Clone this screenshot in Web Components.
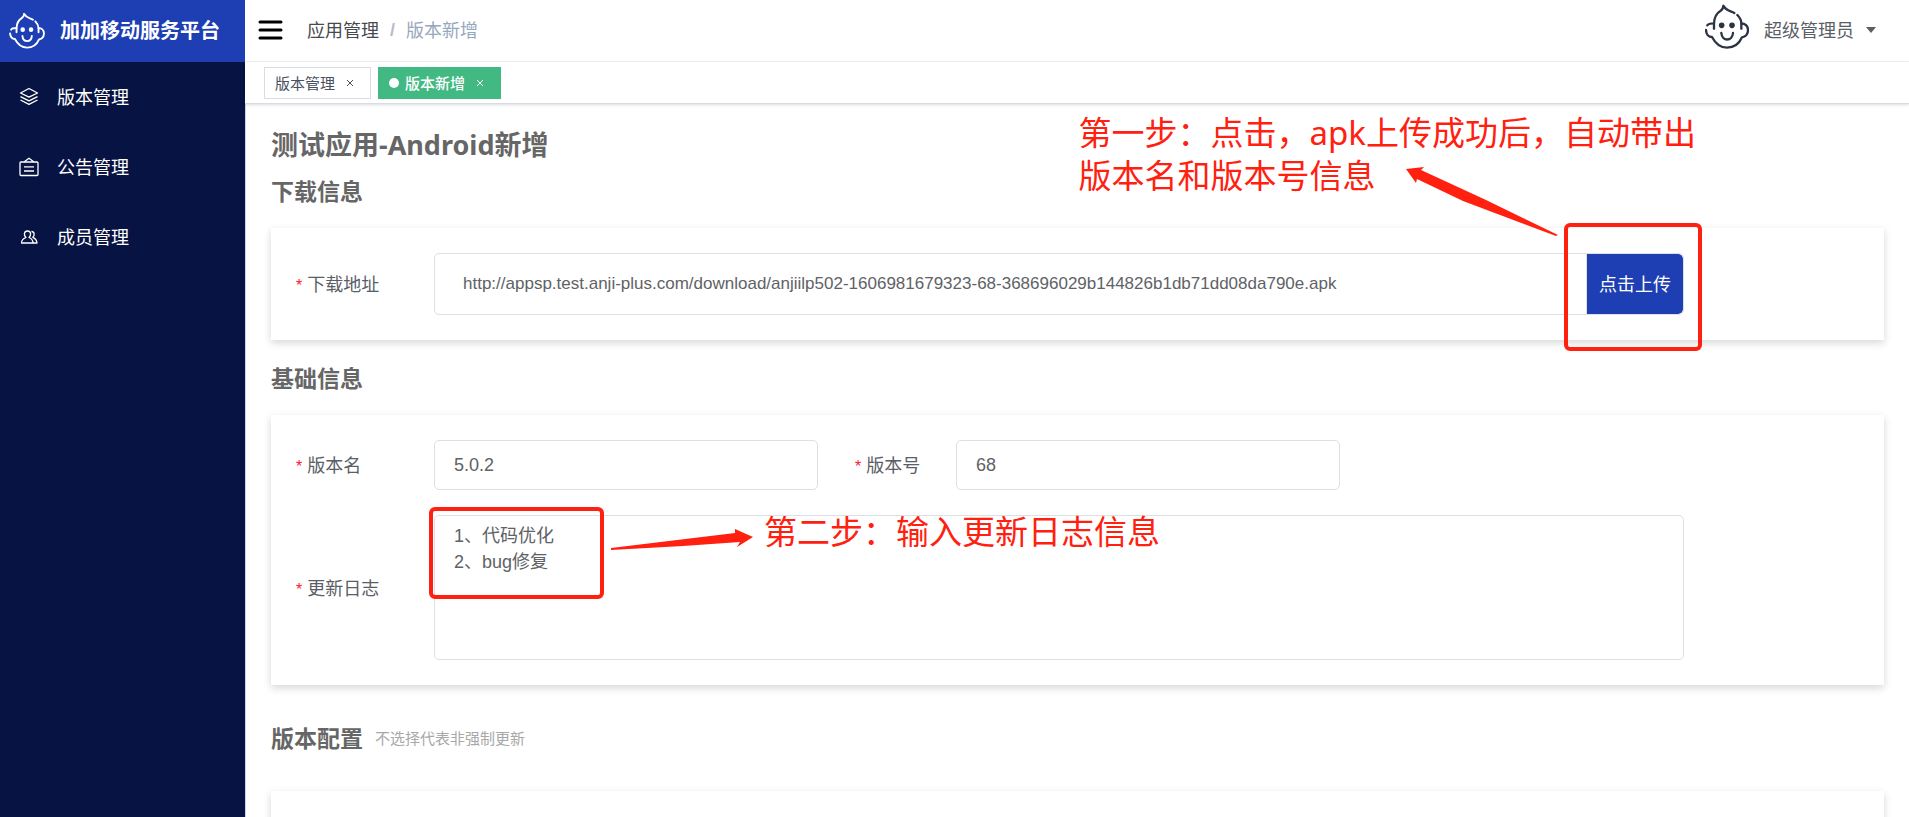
<!DOCTYPE html>
<html lang="zh-CN">
<head>
<meta charset="utf-8">
<title>版本新增 - 加加移动服务平台</title>
<style>
  :root {
    --brand: #1e3eb4;
    --navy: #071443;
    --text: #5a5e66;
    --line: #dcdfe6;
    --mark: #ff2010;
    --cjk: "Noto Sans", "Noto Sans CJK SC", sans-serif;
  }
  html, body { margin: 0; height: 100%; }
  body { font: 18px/26px var(--cjk); color: var(--text); background: #fff; }
</style>
</head>
<body>
<app-shell>
  <app-sidebar slot="side">
    <nav-item icon="layers">版本管理</nav-item>
    <nav-item icon="board">公告管理</nav-item>
    <nav-item icon="users">成员管理</nav-item>
  </app-sidebar>
  <app-header slot="head" section="应用管理" page="版本新增" user="超级管理员"></app-header>
  <tab-strip slot="head">
    <tab-item>版本管理</tab-item>
    <tab-item active>版本新增</tab-item>
  </tab-strip>
  <page-title>测试应用-Android新增</page-title>

  <form-section heading="下载信息">
    <form-field class="url" label="下载地址" value="http://appsp.test.anji-plus.com/download/anjiilp502-1606981679323-68-368696029b144826b1db71dd08da790e.apk">
      <upload-button>点击上传</upload-button>
    </form-field>
    <step-one slot="note"></step-one>
  </form-section>

  <form-section heading="基础信息">
    <field-row>
      <form-field label="版本名" value="5.0.2"></form-field>
      <form-field label="版本号" value="68" inset></form-field>
    </field-row>
    <form-field label="更新日志" multiline value="1、代码优化&#10;2、bug修复"></form-field>
    <step-two slot="note"></step-two>
  </form-section>

  <form-section heading="版本配置" hint="不选择代表非强制更新" spaced></form-section>
</app-shell>

<script>
const FACE = `<svg viewBox="0 0 132 134" fill="none" stroke="currentColor" stroke-width="7" stroke-linecap="round" stroke-linejoin="round" aria-hidden="true">
  <path d="M88 25C78 18 64 20 55 3C56 12 52 15 45 20C32 28 28 40 27 56C12 56 9 58 7 62"/>
  <path d="M3 76C4 90 12 97 21 97C32 118 47 129 66 129C88 129 103 116 111 98C122 96 129 87 129 76C129 64 120 56 109 56C109 47 104 38 97 31"/>
  <path d="M27 57V72"/><path d="M109 57V72"/>
  <path d="M49 85C51 111 82 111 84 85"/>
  <circle cx="50" cy="62" r="5" fill="currentColor"/><circle cx="81" cy="62" r="5" fill="currentColor"/></svg>`;

const ICONS = {
  layers: `<path d="M10 1.5L18.5 6L10 10.2L1.500 6Z"/><path d="M1.500 9.600L10 13.800L18.500 9.600"/><path d="M1.500 13L10 17.300L18.500 13"/>`,
  board: `<rect x="1" y="5" width="18" height="13.500" rx="1"/><path d="M5 5L10 1.200L15 5"/><path d="M5 9.800H15M5 14H15"/>`,
  users: `<path d="M7 10.500C4.500 8.500 4.800 4 8.500 4S12.500 8.500 10 10.500C12.500 11.500 14 13 14 16H2.500C2.500 13 4.500 11.500 7 10.500Z"/><path d="M12.500 4.500C15.500 4.500 16 8.500 13.800 10.300C16.500 11.500 17.800 13 18 16H14"/>`
};

/* Registers an element whose shadow root is rendered from its attributes. */
function define(name, css, html) {
  customElements.define(name, class extends HTMLElement {
    connectedCallback() {
      if (this.shadowRoot) return;
      const t = document.createElement('template');
      t.innerHTML = `<style>:host,*{box-sizing:border-box}${css}</style>` + html(this);
      this.attachShadow({ mode: 'open' }).append(t.content.cloneNode(true));
    }
  });
}
const attr = (el, n) => el.getAttribute(n) || '';

define('app-shell', `
  :host{display:grid;grid-template-columns:245px minmax(0,1fr);height:100vh}
  .right{display:flex;flex-direction:column;min-width:0;min-height:0}
  header{position:relative;z-index:1}
  main{flex:1;min-height:0;overflow:hidden auto;scrollbar-width:none;border-left:1px solid #ccd4f3;padding:23px 25px 25px}`,
  () => `<slot name="side"></slot><div class="right"><header><slot name="head"></slot></header><main><slot></slot></main></div>`);

define('app-sidebar', `
  :host{display:block;background:var(--navy);color:#fff}
  .brand{display:flex;align-items:center;gap:14px;height:62px;padding:0 8px;background:var(--brand);font-size:20px;font-weight:700;white-space:nowrap}
  svg{width:38px;height:36px;flex:none}`,
  () => `<div class="brand">${FACE}<span>加加移动服务平台</span></div><nav><slot></slot></nav>`);

define('nav-item', `
  :host{display:block}
  a{display:flex;align-items:center;gap:18px;height:70px;padding-left:19px;color:#fff;text-decoration:none}
  svg{width:20px;height:20px;flex:none}`,
  el => `<a href="#"><svg viewBox="0 0 20 20" fill="none" stroke="currentColor" stroke-width="1.300" stroke-linejoin="round" aria-hidden="true">${ICONS[attr(el,'icon')]}</svg><slot></slot></a>`);

define('app-header', `
  :host{display:flex;align-items:center;height:62px;padding:0 33px 2px 13px;border-bottom:1px solid #f4f4f6;background:#fff}
  button{border:0;background:none;padding:0;font:inherit;color:inherit;display:flex;align-items:center}
  .menu{color:#000;margin-right:24px}
  .crumb{display:flex;gap:11px;flex:1}
  .crumb a{color:#48494d;text-decoration:none}
  .crumb i{color:#b4bccc;font-style:normal;font-family:"Liberation Sans",sans-serif;font-weight:700}
  .crumb span{color:#97a8be}
  .user .face{width:44px;height:46px;margin:0 15px 5px 0;color:#2c3444}
  .user .caret{margin-left:12px}`,
  el => `<button class="menu" aria-label="折叠菜单"><svg width="25" height="20" stroke="currentColor" stroke-width="3" stroke-linecap="round"><path d="M2 2H23M2 10H23M2 18H23"/></svg></button>
  <nav class="crumb"><a href="#">${attr(el,'section')}</a><i>/</i><span>${attr(el,'page')}</span></nav>
  <button class="user">${FACE.replace('<svg','<svg class="face"')}<span>${attr(el,'user')}</span><svg class="caret" width="10" height="6" fill="currentColor"><path d="M0 0H10L5 6Z"/></svg></button>`);

define('tab-strip', `
  :host{display:flex;gap:7px;height:42px;padding:5px 19px 0;border-bottom:1px solid #d8dce5;background:#fff;box-shadow:0 1px 3px rgba(0,0,0,.12),0 0 3px rgba(0,0,0,.04)}`,
  () => `<slot></slot>`);

define('tab-item', `
  :host{display:flex;align-items:center;height:32px;padding:0 15px 0 10px;border:1px solid #d8dce5;font-size:15px;color:#495060}
  :host([active]){background:#42b983;border-color:#42b983;color:#fff;font-weight:500}
  :host([active]) a::before{content:"";width:10px;height:10px;border-radius:50%;background:#fff;margin-right:6px}
  a{display:flex;align-items:center;color:inherit;text-decoration:none}
  button{border:0;background:none;color:inherit;padding:0;width:10px;height:10px;margin-left:10px;display:flex;align-items:center;justify-content:center}`,
  () => `<a href="#"><slot></slot></a><button aria-label="关闭"><svg width="6" height="6" stroke="currentColor" aria-hidden="true"><path d="M0 0L6 6M6 0L0 6"/></svg></button>`);

define('page-title', `
  :host{display:block}
  h1{margin:0 0 10px;font-size:27px;line-height:36px;color:#666}`,
  () => `<h1><slot></slot></h1>`);

define('form-section', `
  :host{display:block;margin-bottom:20px}
  .head{display:flex;align-items:center;gap:12px;margin-bottom:19px}
  :host([spaced]) .head{margin:35px 0}
  h2{margin:0;font-size:23px;line-height:36px;color:#666}
  small{font-size:15px;color:#a8a8a8}
  .card{position:relative;display:flex;flex-direction:column;gap:25px;min-height:112px;padding:25px;background:#fff;box-shadow:0 3px 8px rgba(0,0,0,.16)}`,
  el => `<div class="head"><h2>${attr(el,'heading')}</h2>${el.hasAttribute('hint') ? `<small>${attr(el,'hint')}</small>` : ''}</div>
  <div class="card"><slot></slot><slot name="note"></slot></div>`);

define('field-row', `
  :host{display:grid;grid-template-columns:minmax(0,522fr) minmax(0,522fr) minmax(0,344fr);margin-right:175px}`,
  () => `<slot></slot>`);

define('form-field', `
  :host{display:grid;grid-template-columns:138px minmax(0,1fr);align-items:center}
  :host(.url),:host([multiline]){margin-right:175px}
  label{display:flex;align-items:center;gap:5px;white-space:nowrap}
  :host([inset]) label{padding-left:37px}
  label::before{content:"*";color:#f5222d;padding-top:4px;font:16px/20px "Liberation Sans",sans-serif}
  .box{display:flex;height:50px;border:1px solid var(--line);border-radius:5px;overflow:hidden}
  :host(.url) .box{height:62px}
  :host([multiline]) .box{height:145px}
  input,textarea{flex:1;min-width:0;border:0;outline:0;background:none;margin:0;padding:0 19px;font:18px/26px "Liberation Sans","Noto Sans CJK SC",sans-serif;color:#606266}
  :host(.url) input{padding:0 28px;font-size:17px}
  textarea{padding:7px 19px;resize:none}`,
  el => `<label for="f">${attr(el,'label')}</label><div class="box">${el.hasAttribute('multiline')
    ? `<textarea id="f">${attr(el,'value')}</textarea>` : `<input id="f" value="${attr(el,'value')}">`}<slot></slot></div>`);

define('upload-button', `
  :host{display:flex;border-left:1px solid var(--line)}
  button{width:96px;border:0;padding:0;background:var(--brand);color:#fff;font:inherit;border-radius:0 5px 5px 0}`,
  () => `<button type="button"><slot></slot></button>`);

/* Tutorial notes drawn over the form: frame, arrow and caption. */
const NOTE = `
  :host{position:absolute;color:var(--mark);pointer-events:none}
  .frame{position:absolute;border:4px solid var(--mark);border-radius:6px}
  svg{position:absolute;overflow:visible;fill:var(--mark)}
  p{position:absolute;margin:0;font-size:33px;line-height:43px;white-space:nowrap}`;

define('step-one', NOTE + `
  :host{top:-5px;right:182px}
  .frame{top:0;right:0;width:138px;height:128px}
  svg{top:-54px;right:144px}
  p{top:-112px;right:6px}`,
  () => `<div class="frame"></div><svg width="152" height="67" viewBox="0 0 152 67"><path d="M0 0L18 -2L15 1L80 31L152 66L150 67L57 32L11 10L10 14Z"/></svg>
  <p>第一步：点击，apk上传成功后，自动带出<br>版本名和版本号信息</p>`);

define('step-two', NOTE + `
  :host{top:92px;left:158px}
  .frame{top:0;left:0;width:175px;height:92px}
  svg{top:22px;left:182px}
  p{top:3px;left:335px}`,
  () => `<div class="frame"></div><svg width="142" height="21" viewBox="0 0 142 21"><path d="M0 19L124 4L124 0L142 8L126 18L129 13L72 17L0 21Z"/></svg>
  <p>第二步：输入更新日志信息</p>`);
</script>
</body>
</html>
